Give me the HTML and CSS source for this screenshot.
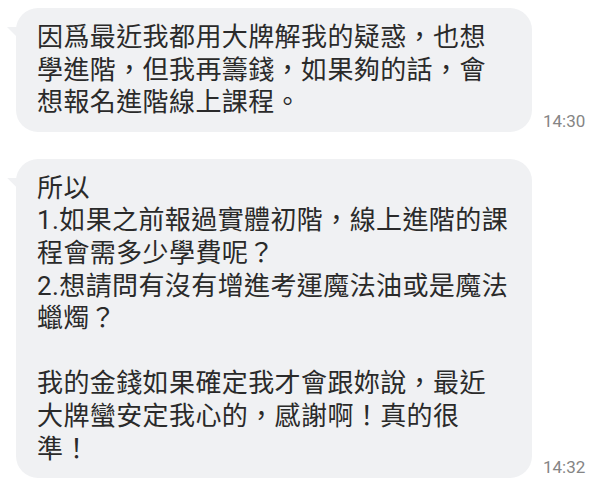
FILE: index.html
```html
<!DOCTYPE html>
<html lang="zh-Hant">
<head>
    <meta charset="UTF-8">
    <meta name="viewport" content="width=device-width, initial-scale=1.0">
    <title>Chat</title>
    <link rel="stylesheet" href="styles.css">
</head>
<body>
    <div class="chat">
        <div class="msg">
            <div class="bubble">因爲最近我都用大牌解我的疑惑，也想<br>學進階，但我再籌錢，如果夠的話，會<br>想報名進階線上課程。</div>
            <span class="time">14:30</span>
        </div>
        <div class="msg">
            <div class="bubble">所以<br>1.如果之前報過實體初階，線上進階的課<br>程會需多少學費呢？<br>2.想請問有沒有增進考運魔法油或是魔法<br>蠟燭？<br><br>我的金錢如果確定我才會跟妳說，最近<br>大牌蠻安定我心的，感謝啊！真的很<br>準！</div>
            <span class="time">14:32</span>
        </div>
    </div>
</body>
</html>
```

FILE: styles.css
```css
body {
    margin: 0;
    background: #fff;
    font-family: Roboto, "Noto Sans CJK TC", sans-serif;
}
.chat {
    display: flex;
    flex-direction: column;
    gap: 27px;
    padding: 8px 0 0 16px;
}
.msg {
    display: flex;
    align-items: flex-end;
    gap: 11px;
}
.bubble {
    position: relative;
    width: 474px;
    padding: 13px 21px;
    background: #f0f1f3;
    border-radius: 22px;
    color: #2a2a2a;
    font-size: 26px;
    line-height: 32.6px;
    letter-spacing: 0.4px;
    white-space: nowrap;
}
.bubble::before {
    content: "";
    position: absolute;
    left: -9px;
    top: 19px;
    width: 10px;
    height: 10px;
    background: #f0f1f3;
    clip-path: polygon(0 0, 100% 0, 100% 100%);
}
.time {
    color: #858585;
    font-size: 17px;
    line-height: 20px;
    letter-spacing: 0;
    padding-bottom: 1px;
}
```
